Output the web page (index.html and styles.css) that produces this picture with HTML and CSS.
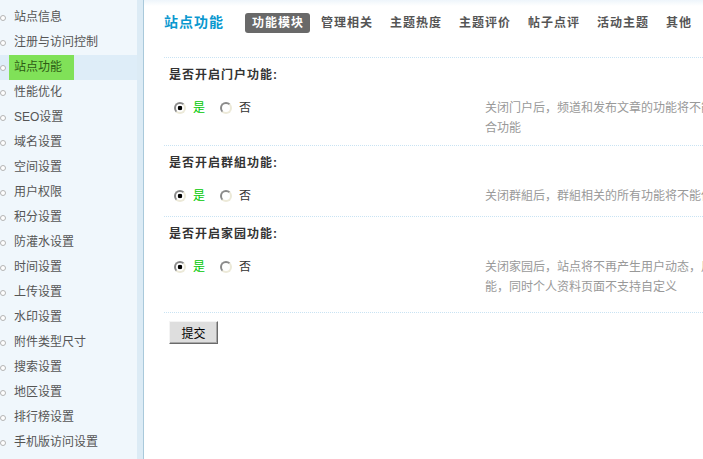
FILE: index.html
```html
<!DOCTYPE html>
<html lang="zh-CN">
<head>
<meta charset="utf-8">
<title>站点功能</title>
<link rel="stylesheet" href="styles.css">
</head>
<body>
<div class="layout">
  <aside class="side">
    <ul class="menu">
      <li class="menu-item"><span class="dot"></span><a class="menu-link">站点信息</a></li>
      <li class="menu-item"><span class="dot"></span><a class="menu-link">注册与访问控制</a></li>
      <li class="menu-item is-current"><span class="dot"></span><a class="menu-link">站点功能</a></li>
      <li class="menu-item"><span class="dot"></span><a class="menu-link">性能优化</a></li>
      <li class="menu-item"><span class="dot"></span><a class="menu-link">SEO设置</a></li>
      <li class="menu-item"><span class="dot"></span><a class="menu-link">域名设置</a></li>
      <li class="menu-item"><span class="dot"></span><a class="menu-link">空间设置</a></li>
      <li class="menu-item"><span class="dot"></span><a class="menu-link">用户权限</a></li>
      <li class="menu-item"><span class="dot"></span><a class="menu-link">积分设置</a></li>
      <li class="menu-item"><span class="dot"></span><a class="menu-link">防灌水设置</a></li>
      <li class="menu-item"><span class="dot"></span><a class="menu-link">时间设置</a></li>
      <li class="menu-item"><span class="dot"></span><a class="menu-link">上传设置</a></li>
      <li class="menu-item"><span class="dot"></span><a class="menu-link">水印设置</a></li>
      <li class="menu-item"><span class="dot"></span><a class="menu-link">附件类型尺寸</a></li>
      <li class="menu-item"><span class="dot"></span><a class="menu-link">搜索设置</a></li>
      <li class="menu-item"><span class="dot"></span><a class="menu-link">地区设置</a></li>
      <li class="menu-item"><span class="dot"></span><a class="menu-link">排行榜设置</a></li>
      <li class="menu-item"><span class="dot"></span><a class="menu-link">手机版访问设置</a></li>
    </ul>
  </aside>

  <main class="main">
    <div class="head">
      <h3 class="title">站点功能</h3>
      <ul class="tabs">
        <li class="tab is-active">功能模块</li>
        <li class="tab">管理相关</li>
        <li class="tab">主题热度</li>
        <li class="tab">主题评价</li>
        <li class="tab">帖子点评</li>
        <li class="tab">活动主题</li>
        <li class="tab">其他</li>
      </ul>
    </div>

    <form class="form">
      <div class="sec sec-portal">
        <div class="sec-label">是否开启门户功能:</div>
        <div class="sec-row">
          <div class="opts">
            <label class="opt opt-yes"><input class="radio" type="radio" name="portal" checked><span>是</span></label>
            <label class="opt"><input class="radio" type="radio" name="portal"><span>否</span></label>
          </div>
          <div class="tips">关闭门户后，频道和发布文章的功能将不能使用，但不影响门户的聚合功能</div>
        </div>
      </div>

      <div class="sec sec-group">
        <div class="sec-label">是否开启群組功能:</div>
        <div class="sec-row">
          <div class="opts">
            <label class="opt opt-yes"><input class="radio" type="radio" name="group" checked><span>是</span></label>
            <label class="opt"><input class="radio" type="radio" name="group"><span>否</span></label>
          </div>
          <div class="tips">关闭群組后，群組相关的所有功能将不能使用</div>
        </div>
      </div>

      <div class="sec sec-home">
        <div class="sec-label">是否开启家园功能:</div>
        <div class="sec-row">
          <div class="opts">
            <label class="opt opt-yes"><input class="radio" type="radio" name="home" checked><span>是</span></label>
            <label class="opt"><input class="radio" type="radio" name="home"><span>否</span></label>
          </div>
          <div class="tips">关闭家园后，站点将不再产生用户动态，用户将不能使用家园相关功能，同时个人资料页面不支持自定义</div>
        </div>
      </div>

      <div class="sec sec-submit">
        <button class="btn" type="button">提交</button>
      </div>
    </form>
  </main>
</div>
</body>
</html>
```

FILE: styles.css
```css
html, body {
  margin: 0;
  padding: 0;
  height: 100%;
  overflow: hidden;
}

body {
  font-family: "Liberation Sans", "Noto Sans CJK SC", sans-serif;
  font-size: 12px;
  color: #333;
  background: #fff;
}

.layout {
  display: flex;
  height: 100vh;
}

/* ---------- sidebar ---------- */
.side {
  flex: 0 0 143px;
  background: linear-gradient(to right, #f0f7fc 137px, #dcebf5 137px);
  border-right: 1px solid #a9c9db;
}

.menu {
  list-style: none;
  margin: 0;
  padding: 5px 0 0;
  width: 137px;
}

.menu-item {
  display: flex;
  align-items: center;
  height: 25px;
}

.dot {
  flex: 0 0 auto;
  width: 4px;
  height: 4px;
  border: 1px solid #b4b4b4;
  border-radius: 50%;
  background: #fff;
  margin: 1px 3px 0 0;
}

.menu-link {
  display: block;
  line-height: 25px;
  padding: 0 12px 0 5px;
  color: #555;
  white-space: nowrap;
}

.menu-item.is-current {
  background: #deedf8;
}

.is-current .menu-link {
  background: #80e158;
  color: #2d5a14;
}

/* ---------- main ---------- */
.main {
  flex: 1;
  min-width: 0;
  overflow: hidden;
  padding: 13px 0 0 20px;
  background: linear-gradient(#eef5fb, #fff 6px);
}

.head {
  display: flex;
  align-items: center;
  height: 20px;
  margin-bottom: 24px;
  white-space: nowrap;
}

.title {
  margin: 0 21px 0 0;
  font-size: 14px;
  font-weight: bold;
  letter-spacing: 1px;
  color: #0a98cf;
  line-height: 20px;
  position: relative;
  top: -1px;
}

.tabs {
  display: flex;
  list-style: none;
  margin: 0;
  padding: 0;
}

.tab {
  height: 20px;
  line-height: 20px;
  padding: 0 6px 0 7px;
  margin-right: 4px;
  font-weight: bold;
  font-size: 12px;
  letter-spacing: 1px;
  color: #555;
  border-radius: 3px;
}

.tab.is-active {
  background: #696969;
  color: #fff;
}

/* ---------- form ---------- */
.form {
  margin: 0;
}

.sec {
  border-top: 1px dotted #c9e3f3;
}

.sec-label {
  padding: 7px 0 0 5px;
  line-height: 20px;
  font-weight: bold;
  letter-spacing: 1px;
  color: #333;
}

.sec-row {
  display: flex;
  margin-top: 13px;
  padding-left: 5px;
}

.opts {
  flex: 0 0 316px;
  display: flex;
  align-items: center;
  height: 20px;
}

.opt {
  display: inline-flex;
  align-items: center;
  gap: 7px;
  color: #333;
  line-height: 20px;
}

.opt-yes {
  margin-right: 10px;
}

.opt-yes span {
  color: #00c800;
}

.radio {
  -webkit-appearance: none;
  appearance: none;
  box-sizing: border-box;
  width: 12px;
  height: 12px;
  margin: 0 0 0 5px;
  border: 2px solid;
  border-color: #8a8a8a #ece9d8 #ece9d8 #8a8a8a;
  border-radius: 50%;
  background: #fff;
}

.radio:checked {
  background: radial-gradient(circle, #000 0 2px, #fff 2.6px);
}

.tips {
  flex: 0 0 360px;
  width: 360px;
  line-height: 20px;
  color: #999;
}

.sec-portal { padding-bottom: 7px; }
.sec-group { padding-bottom: 10px; }
.sec-home { padding-bottom: 15px; }

.sec-submit {
  padding: 8px 0 0 5px;
}

.btn {
  width: 49px;
  height: 23px;
  padding: 0;
  font-family: inherit;
  font-size: 12px;
  color: #000;
  background: #dedede;
  border: 1px solid;
  border-color: #f4f4f4 #6a6a6a #6a6a6a #f4f4f4;
  box-shadow: inset -1px -1px 0 #a8a8a8;
}
```
